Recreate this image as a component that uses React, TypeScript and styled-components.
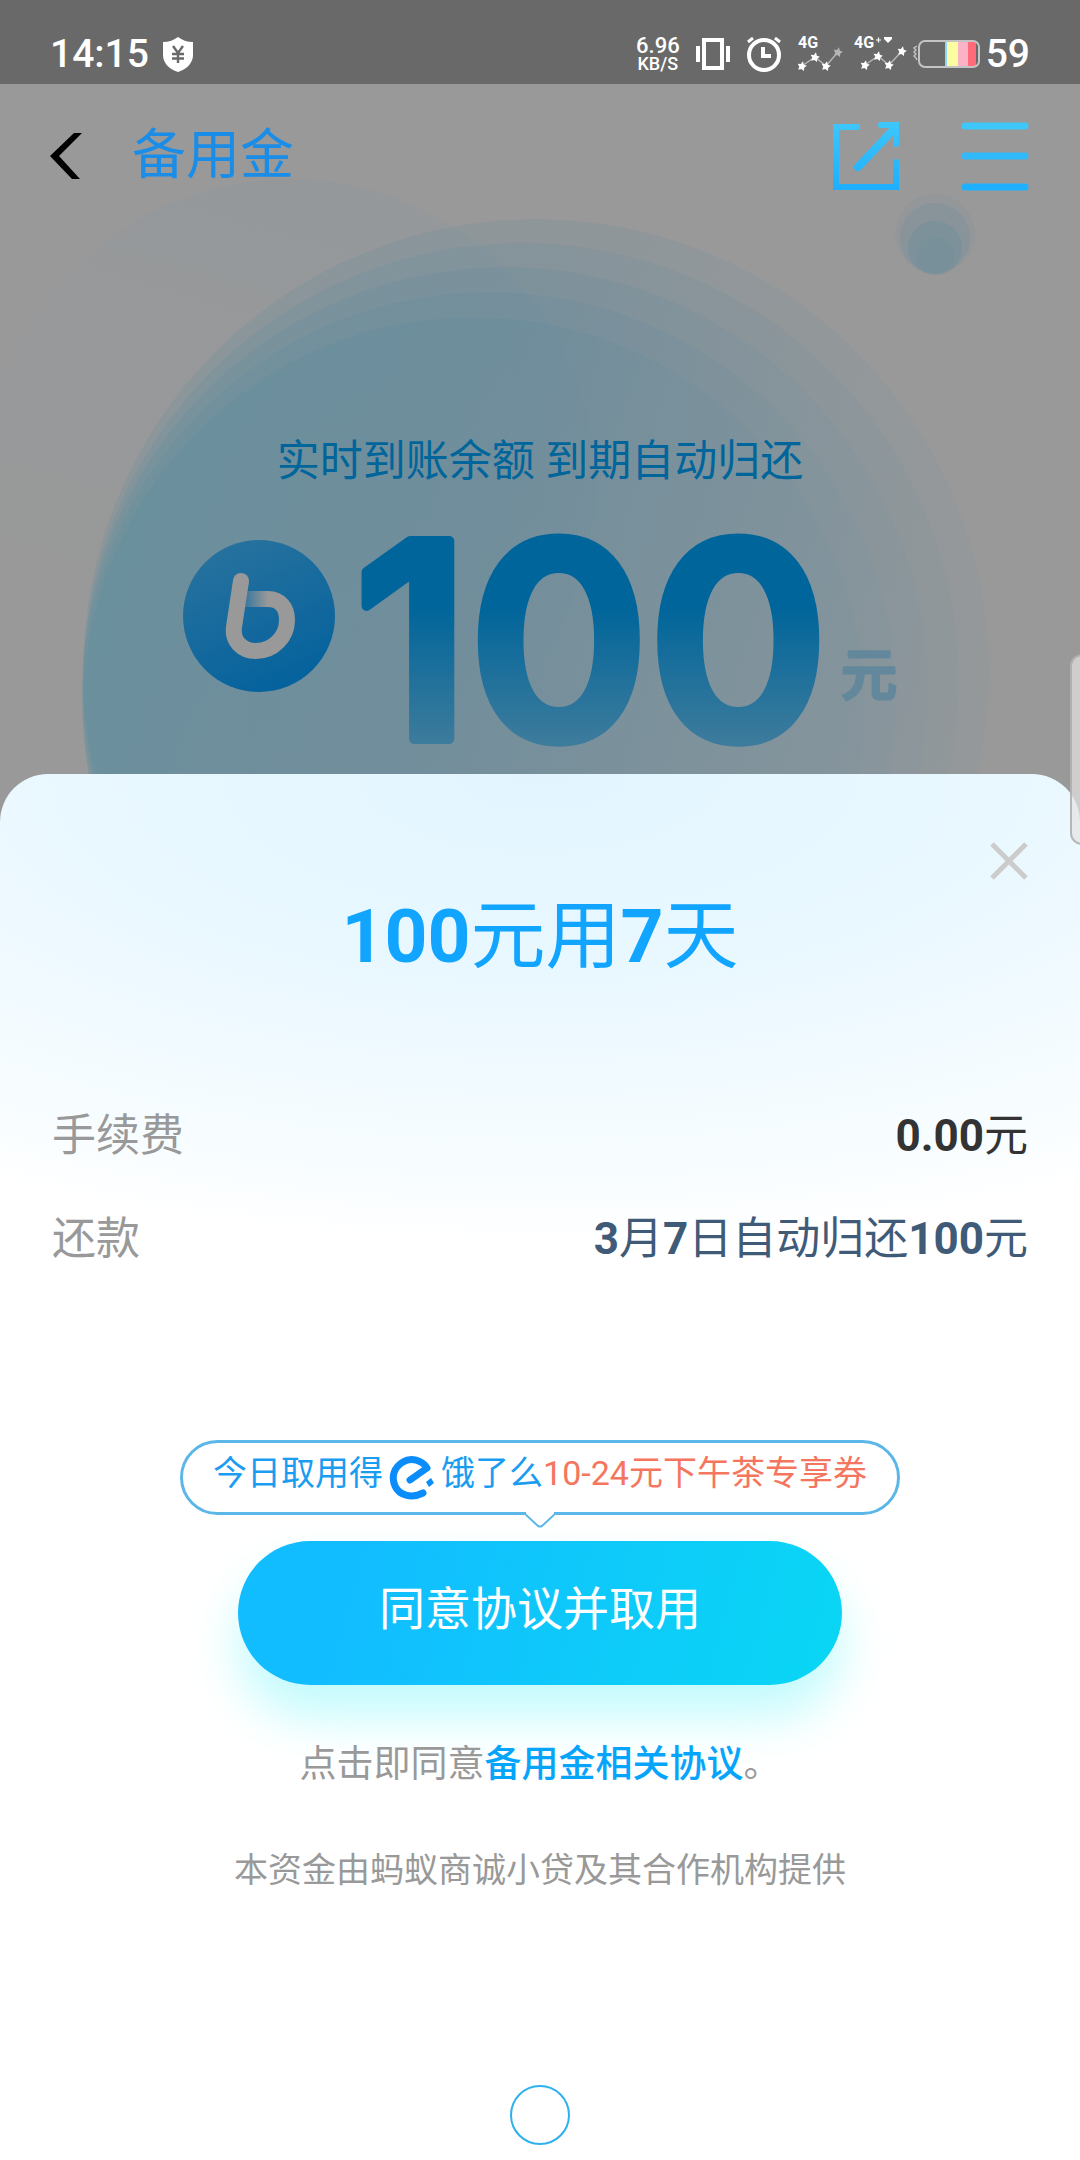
import React from 'react';
import styled, { createGlobalStyle } from 'styled-components';

const GlobalStyle = createGlobalStyle`
  * { box-sizing: border-box; }
  body {
    margin: 0;
    background: #ffffff;
    font-family: Roboto, "Noto Sans CJK SC", sans-serif;
  }
  h1, h2, p, dl, dt, dd { margin: 0; font-weight: 400; }
  button {
    border: 0;
    padding: 0;
    background: none;
    font: inherit;
    color: inherit;
    cursor: pointer;
  }
  svg { display: block; flex: none; }
`;

const Screen = styled.main`
  position: relative;
  display: flex;
  flex-direction: column;
  min-height: 100vh;
  overflow: hidden;
`;

/* ---------- status bar ---------- */

const StatusBar = styled.div`
  display: flex;
  justify-content: space-between;
  height: 84px;
  padding: 29px 50px 5px;
  background: #696969;
  color: #ffffff;
  font-weight: 500;
`;

const StatusGroup = styled.div<{ $gap: number }>`
  display: flex;
  align-items: center;
  gap: ${(p) => p.$gap}px;
`;

const StatusText = styled.span`
  font-size: 39px;
  line-height: 50px;
`;

const NetSpeed = styled.span`
  display: flex;
  flex-direction: column;
  align-items: center;
  font-size: 22px;
  line-height: 20px;
`;

const SpeedUnit = styled.span`
  font-size: 18px;
  line-height: 16px;
`;

/* ---------- dimmed page ---------- */

const Dimmed = styled.section`
  position: relative;
  padding-bottom: 14px;
  background: #999999;
`;

const Backdrop = styled.svg`
  position: absolute;
  top: 0;
  left: 50%;
  width: 1080px;
  height: 740px;
  margin-left: -540px;
`;

const NavBar = styled.header`
  position: relative;
  display: flex;
  align-items: center;
  height: 144px;
  padding: 0 50px;
`;

const PageTitle = styled.h1`
  flex: 1;
  padding-left: 48px;
  font-size: 54px;
  line-height: 72px;
  color: #1a8de8;
`;

const NavActions = styled.div`
  display: flex;
  gap: 60px;
`;

const Hero = styled.div`
  position: relative;
  display: flex;
  flex-direction: column;
  align-items: center;
  padding-top: 203px;
`;

const HeroNote = styled.p`
  font-size: 43px;
  line-height: 60px;
  color: #00659b;
`;

const AmountRow = styled.div`
  display: flex;
  align-items: flex-start;
  justify-content: center;
  height: 319px;
`;

const LogoSlot = styled.div`
  padding: 48px 20px 0 0;
`;

const UnitSlot = styled.div`
  padding: 142px 0 0 13px;
`;

/* ---------- sheet ---------- */

const Sheet = styled.section`
  position: relative;
  display: flex;
  flex: 1;
  flex-direction: column;
  margin-top: -50px;
  padding: 68px 52px 15px;
  border-radius: 48px 48px 0 0;
  background:
    radial-gradient(ellipse 1100px 470px at 50% 0, #e2f5ff 0%, #e9f8ff 42%, #f1faff 66%, #f8fdff 86%, #ffffff 100%) no-repeat,
    #ffffff;
`;

const CloseButton = styled.button`
  align-self: flex-end;
`;

const SheetTitle = styled.h2`
  margin-top: 16px;
  font-size: 75px;
  line-height: 80px;
  text-align: center;
  color: #12a5ff;
`;

const Digits = styled.b`
  font-weight: 700;
`;

const Details = styled.dl`
  display: flex;
  flex-direction: column;
  gap: 43px;
  margin-top: 130px;
`;

const DetailRow = styled.div`
  display: flex;
  justify-content: space-between;
  font-size: 44px;
  line-height: 60px;
`;

const DetailLabel = styled.dt`
  color: #999999;
`;

const DetailValue = styled.dd<{ $color: string }>`
  color: ${(p) => p.$color};
`;

const Promo = styled.div`
  position: relative;
  display: flex;
  align-items: center;
  align-self: center;
  height: 75px;
  margin-top: 171px;
  padding: 0 30px;
  border: 3px solid #5cb7e8;
  border-radius: 38px;
  background: #ffffff;
  font-size: 34px;
  line-height: 50px;
`;

const PromoText = styled.span<{ $color: string }>`
  padding-bottom: 10px;
  white-space: nowrap;
  color: ${(p) => p.$color};
`;

const PromoTail = styled.svg`
  position: absolute;
  top: 69px;
  left: 50%;
  margin-left: -15px;
`;

const ConfirmButton = styled.button`
  align-self: center;
  width: 604px;
  max-width: 100%;
  height: 144px;
  margin-top: 26px;
  padding-bottom: 16px;
  border-radius: 72px;
  background: linear-gradient(105deg, #12bdff 20%, #0ad5f5 95%);
  box-shadow: 0 32px 48px rgba(0, 240, 245, 0.24);
  font-size: 46px;
  color: #ffffff;
`;

const Terms = styled.p`
  margin-top: 55px;
  font-size: 37px;
  line-height: 50px;
  text-align: center;
  color: #999999;
`;

const TermsLink = styled.a`
  font-weight: 500;
  color: #06a5fb;
  text-decoration: none;
`;

const Provider = styled.p`
  margin-top: 55px;
  font-size: 34px;
  line-height: 50px;
  text-align: center;
  color: #999999;
`;

const HomeButton = styled.button`
  align-self: center;
  width: 60px;
  height: 60px;
  margin-top: auto;
  border: 2px solid #2cb1ee;
  border-radius: 50%;
`;

const EdgePanel = styled.div`
  position: absolute;
  top: 654px;
  right: -14px;
  width: 24px;
  height: 191px;
  border: 2px solid rgba(170, 170, 170, 0.8);
  border-radius: 12px;
  background: rgba(228, 228, 228, 0.7);
`;

/* ---------- drawings ---------- */

const ShieldIcon = () => (
  <svg width="30" height="35" viewBox="0 0 30 35">
    <path d="M15 0C19 3 24 5 30 5V18C30 26 24 32 15 35C6 32 0 26 0 18V5C6 5 11 3 15 0Z" fill="#fff" />
    <path d="M10 9L15 16L20 9M9 17H21M9 21.5H21M15 16V26" fill="none" stroke="#696969" strokeWidth="2.4" />
  </svg>
);

const VibrateIcon = () => (
  <svg width="34" height="34" viewBox="0 0 34 34">
    <rect x="8" y="3" width="18" height="28" fill="none" stroke="#fff" strokeWidth="4" />
    <path d="M2 9V25M32 9V25" stroke="#fff" strokeWidth="4" />
  </svg>
);

const AlarmIcon = () => (
  <svg width="36" height="36" viewBox="0 0 36 36">
    <circle cx="18" cy="19" r="15" fill="none" stroke="#fff" strokeWidth="4" />
    <path d="M17 11V20H25" fill="none" stroke="#fff" strokeWidth="4" />
    <path d="M2 6L7 2M34 6L29 2" stroke="#fff" strokeWidth="3" />
  </svg>
);

const Star = ({ x, y, color = '#fff' }: { x: number; y: number; color?: string }) => (
  <path
    transform={`translate(${x} ${y}) rotate(12)`}
    d="M0 -4.8L1.5 -1.7L4.7 -1.3L2.5 1.2L3 4.5L0 3L-3 4.5L-2.5 1.2L-4.7 -1.3L-1.5 -1.7Z"
    fill={color}
  />
);

const SignalLabel = styled.text`
  font-family: Roboto, sans-serif;
  font-size: 16px;
  font-weight: 700;
`;

const SignalOne = () => (
  <svg width="45" height="44" viewBox="0 -4 45 44">
    <SignalLabel x="0" y="12" fill="#fff">4G</SignalLabel>
    <path d="M4 30L17 21L28 30L40 16" fill="none" stroke="#b5b5b5" strokeWidth="1.5" />
    <Star x={4} y={30} />
    <Star x={17} y={21} />
    <Star x={28} y={30} />
    <Star x={40} y={16} color="#b5b5b5" />
  </svg>
);

const SignalTwo = () => (
  <svg width="53" height="44" viewBox="0 -4 53 44">
    <SignalLabel x="0" y="12" fill="#fff">4G</SignalLabel>
    <path d="M22 4H27M24.500 1.500V6.500" stroke="#fff" strokeWidth="1.2" />
    <path d="M30 1H38V3L34 7L30 3Z" fill="#fff" />
    <path d="M11 29L24 20L35 29L48 15" fill="none" stroke="#b5b5b5" strokeWidth="1.5" />
    <Star x={11} y={29} />
    <Star x={24} y={20} />
    <Star x={35} y={29} />
    <Star x={48} y={15} />
  </svg>
);

const BatteryIcon = () => (
  <svg width="67" height="30" viewBox="0 0 67 30">
    <rect x="32" y="2" width="2" height="26" fill="#8fd8f5" />
    <rect x="34" y="2" width="11" height="26" fill="#fbfda0" />
    <rect x="45" y="2" width="10" height="26" fill="#fbb2c6" />
    <rect x="55" y="2" width="8" height="26" fill="#ff6b7a" />
    <rect x="6" y="2" width="60" height="26" rx="6" fill="none" stroke="#c4c4c4" strokeWidth="2" />
    <path d="M4 7L1 9L3 11L1 13L3 15L1 17L3 19L4 21" fill="none" stroke="#c4c4c4" strokeWidth="1.4" />
  </svg>
);

const BackIcon = () => (
  <svg width="34" height="48" viewBox="0 0 34 48">
    <path d="M24 1H32L9 24L30 47H22L0 24Z" fill="#000" />
  </svg>
);

const ShareIcon = () => (
  <svg width="68" height="70" viewBox="0 0 68 70">
    <defs>
      <linearGradient id="share" gradientUnits="userSpaceOnUse" x1="0" y1="0" x2="0" y2="70">
        <stop offset="0" stopColor="#3ec7fb" />
        <stop offset="1" stopColor="#1daefe" />
      </linearGradient>
    </defs>
    <g fill="none" stroke="url(#share)" strokeWidth="6" strokeLinecap="round">
      <path d="M25 6H4V66H64V41" />
      <path d="M49 4H64V23" />
      <path d="M26 46L62 8" strokeWidth="8" />
    </g>
  </svg>
);

const MenuIcon = () => (
  <svg width="70" height="70" viewBox="0 0 70 70" strokeWidth="7" strokeLinecap="round">
    <path d="M5 5H65" stroke="#3ec7fb" />
    <path d="M5 35H65" stroke="#30bafb" />
    <path d="M5 66H65" stroke="#1fb0ff" />
  </svg>
);

const rings = [
  { x: 536, y: 588, r: 453 },
  { x: 521, y: 597, r: 438 },
  { x: 505, y: 606, r: 423 },
  { x: 489, y: 615, r: 407 },
  { x: 474, y: 624, r: 391 },
];

const drops = [
  { y: 150, r: 40, o: 0.08 },
  { y: 154, r: 35, o: 0.14 },
  { y: 164, r: 27, o: 0.18 },
  { y: 172, r: 19, o: 0.1 },
];

const HeroBackdrop = () => (
  <Backdrop viewBox="0 0 1080 740" aria-hidden="true">
    <defs>
      <linearGradient id="ring" x1="0.05" y1="0.3" x2="1" y2="0.6">
        <stop offset="0" stopColor="#4688a0" stopOpacity="0.15" />
        <stop offset="0.45" stopColor="#48829f" stopOpacity="0.12" />
        <stop offset="1" stopColor="#6b8fa2" stopOpacity="0.09" />
      </linearGradient>
      <linearGradient id="haze" x1="0.6" y1="0" x2="0.3" y2="1">
        <stop offset="0" stopColor="#8a969f" stopOpacity="0.32" />
        <stop offset="1" stopColor="#959799" stopOpacity="0" />
      </linearGradient>
    </defs>
    <circle cx="290" cy="400" r="305" fill="url(#haze)" />
    {rings.map((c) => (
      <circle key={c.r} cx={c.x} cy={c.y} r={c.r} fill="url(#ring)" />
    ))}
    {drops.map((c) => (
      <circle key={c.r} cx="935" cy={c.y} r={c.r} fill="#4a859f" fillOpacity={c.o} />
    ))}
  </Backdrop>
);

const BrandLogo = () => (
  <svg width="154" height="154" viewBox="0 0 154 154" aria-label="备用金">
    <defs>
      <linearGradient id="disc" x1="0.3" y1="0" x2="0.75" y2="1">
        <stop offset="0" stopColor="#27729e" />
        <stop offset="1" stopColor="#03619d" />
      </linearGradient>
      <linearGradient id="fold" gradientUnits="userSpaceOnUse" x1="62" y1="0" x2="86" y2="0">
        <stop offset="0" stopColor="#999" stopOpacity="0.2" />
        <stop offset="1" stopColor="#999" />
      </linearGradient>
    </defs>
    <circle cx="77" cy="77" r="76" fill="url(#disc)" />
    <g fill="none" strokeWidth="16">
      <path d="M61 60H87" stroke="url(#fold)" />
      <path
        d="M59 42L52 88C50 102 60 112 74 112C91 112 105 98 105 81C105 69 98 60 86 60"
        stroke="#999"
      />
      <circle cx="59" cy="42" r="8" fill="#999" stroke="none" />
    </g>
  </svg>
);

const AmountText = styled.text`
  font-family: Inter, sans-serif;
  font-size: 272px;
  font-weight: 600;
`;

const AmountFigure = () => (
  <svg width="470" height="319" viewBox="0 0 470 319">
    <defs>
      <linearGradient id="amount" gradientUnits="userSpaceOnUse" x1="0" y1="115" x2="0" y2="257">
        <stop offset="0" stopColor="#00659b" />
        <stop offset="1" stopColor="#3f7c9c" />
      </linearGradient>
    </defs>
    <AmountText
      x="235"
      y="248"
      textAnchor="middle"
      fill="url(#amount)"
      stroke="url(#amount)"
      strokeWidth="10"
      strokeLinejoin="round"
    >
      100
    </AmountText>
  </svg>
);

const UnitText = styled.text`
  font-family: "Noto Sans CJK SC", sans-serif;
  font-size: 56px;
  font-weight: 500;
`;

const UnitFigure = () => (
  <svg width="60" height="84" viewBox="0 0 60 84">
    <UnitText x="2" y="62" fill="#63889b" stroke="#63889b" strokeWidth="3" strokeLinejoin="round">
      元
    </UnitText>
  </svg>
);

const CloseIcon = () => (
  <svg width="38" height="38" viewBox="0 0 38 38">
    <path d="M2 2L36 36M36 2L2 36" stroke="#cccccc" strokeWidth="5" />
  </svg>
);

const ElemeLogo = () => (
  <svg width="58" height="46" viewBox="-6 0 58 46" aria-label="饿了么">
    <g fill="none" stroke="#0a8dfb" strokeWidth="7">
      <path
        d="M21 25L38 13C33 5 22 2 14 7C5 12 2 22 6 31C10 40 22 44 34 38"
        strokeLinecap="round"
        strokeLinejoin="round"
      />
    </g>
    <path d="M37 27L42 23L45 28L40 32Z" fill="#0a8dfb" />
  </svg>
);

export default function App() {
  return (
    <>
      <GlobalStyle />
      <Screen>
        <StatusBar>
          <StatusGroup $gap={14}>
            <StatusText>14:15</StatusText>
            <ShieldIcon />
          </StatusGroup>
          <StatusGroup $gap={16}>
            <NetSpeed>
              6.96
              <SpeedUnit>KB/S</SpeedUnit>
            </NetSpeed>
            <VibrateIcon />
            <AlarmIcon />
            <StatusGroup $gap={6}>
              <StatusGroup $gap={11}>
                <SignalOne />
                <SignalTwo />
              </StatusGroup>
              <BatteryIcon />
              <StatusText>59</StatusText>
            </StatusGroup>
          </StatusGroup>
        </StatusBar>

        <Dimmed>
          <HeroBackdrop />
          <NavBar>
            <button type="button" aria-label="返回">
              <BackIcon />
            </button>
            <PageTitle>备用金</PageTitle>
            <NavActions>
              <button type="button" aria-label="分享">
                <ShareIcon />
              </button>
              <button type="button" aria-label="菜单">
                <MenuIcon />
              </button>
            </NavActions>
          </NavBar>
          <Hero>
            <HeroNote>实时到账余额 到期自动归还</HeroNote>
            <AmountRow>
              <LogoSlot>
                <BrandLogo />
              </LogoSlot>
              <AmountFigure />
              <UnitSlot>
                <UnitFigure />
              </UnitSlot>
            </AmountRow>
          </Hero>
        </Dimmed>

        <Sheet>
          <CloseButton type="button" aria-label="关闭">
            <CloseIcon />
          </CloseButton>
          <SheetTitle>
            <Digits>100</Digits>元用<Digits>7</Digits>天
          </SheetTitle>
          <Details>
            <DetailRow>
              <DetailLabel>手续费</DetailLabel>
              <DetailValue $color="#333333">
                <Digits>0.00</Digits>元
              </DetailValue>
            </DetailRow>
            <DetailRow>
              <DetailLabel>还款</DetailLabel>
              <DetailValue $color="#3f5b78">
                <Digits>3</Digits>月<Digits>7</Digits>日自动归还<Digits>100</Digits>元
              </DetailValue>
            </DetailRow>
          </Details>
          <Promo>
            <PromoText $color="#1a9cf0">今日取用得</PromoText>
            <ElemeLogo />
            <PromoText $color="#1a9cf0">饿了么</PromoText>
            <PromoText $color="#f5765e">10-24元下午茶专享券</PromoText>
            <PromoTail width="30" height="16" viewBox="0 0 30 16">
              <path d="M1 0H29V3L17 14Q15 15 13 14L1 3Z" fill="#fff" />
              <path d="M0 2L13 14Q15 15 17 14L30 2" fill="none" stroke="#5cb7e8" strokeWidth="2" />
            </PromoTail>
          </Promo>
          <ConfirmButton type="button">同意协议并取用</ConfirmButton>
          <Terms>
            点击即同意<TermsLink href="#terms">备用金相关协议</TermsLink>。
          </Terms>
          <Provider>本资金由蚂蚁商诚小贷及其合作机构提供</Provider>
          <HomeButton type="button" aria-label="主页" />
        </Sheet>
        <EdgePanel />
      </Screen>
    </>
  );
}
